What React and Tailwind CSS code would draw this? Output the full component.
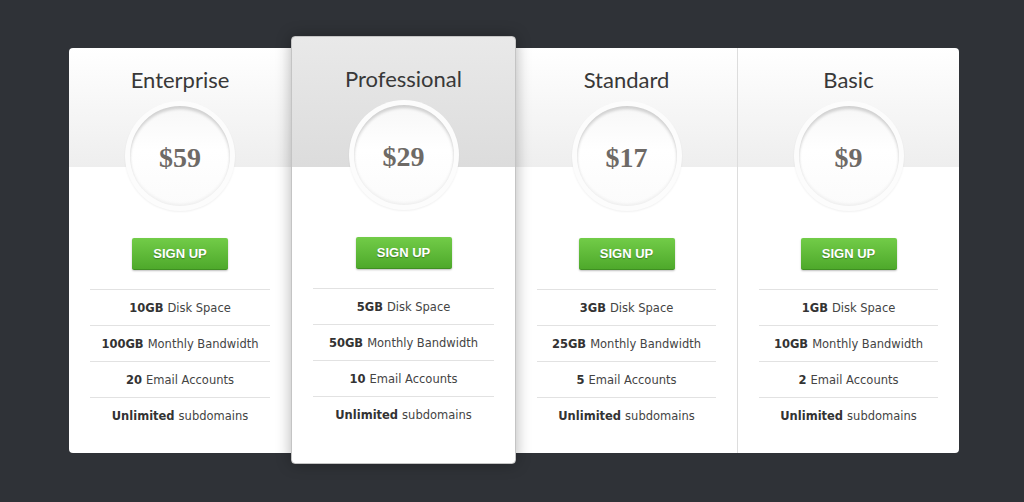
import React from 'react';

// Pricing plans shown in the table
const plans = [
  {
    name: 'Enterprise',
    price: '$59',
    features: [['10GB', 'Disk Space'], ['100GB', 'Monthly Bandwidth'], ['20', 'Email Accounts'], ['Unlimited', 'subdomains']],
  },
  {
    name: 'Professional',
    price: '$29',
    featured: true,
    features: [['5GB', 'Disk Space'], ['50GB', 'Monthly Bandwidth'], ['10', 'Email Accounts'], ['Unlimited', 'subdomains']],
  },
  {
    name: 'Standard',
    price: '$17',
    features: [['3GB', 'Disk Space'], ['25GB', 'Monthly Bandwidth'], ['5', 'Email Accounts'], ['Unlimited', 'subdomains']],
  },
  {
    name: 'Basic',
    price: '$9',
    features: [['1GB', 'Disk Space'], ['10GB', 'Monthly Bandwidth'], ['2', 'Email Accounts'], ['Unlimited', 'subdomains']],
  },
];

function PriceCircle({ price }) {
  return (
    <div className="mx-auto mt-[7px] flex h-[110px] w-[110px] items-center justify-center rounded-full bg-[#fcfcfc] shadow-[0_1px_2px_rgba(0,0,0,0.06)]">
      <div className="flex h-[100px] w-[100px] items-center justify-center rounded-full bg-[linear-gradient(to_bottom,#f7f7f7,#ffffff_45%,#fbfbfb)] shadow-[inset_0_3px_3px_rgba(0,0,0,0.16),inset_0_-2px_3px_rgba(0,0,0,0.05)]">
        <span className="pt-[4px] font-['Liberation_Serif',serif] text-[28px] font-bold text-[#6e6a66] [text-shadow:0_1px_0_#fff]">
          {price}
        </span>
      </div>
    </div>
  );
}

function PlanColumn({ plan, className }) {
  return (
    <div className={className}>
      <div className="pt-[18px] text-center font-['Lato',sans-serif] text-[22px] leading-[28px] text-[#383838]">
        {plan.name}
      </div>
      <PriceCircle price={plan.price} />
      <div className="mt-[27px] flex justify-center">
        <button className="h-[32px] w-[96px] rounded-[2px] border-b border-[#3f8f22] bg-[linear-gradient(to_bottom,#72cc48,#4ea92b)] font-['Liberation_Sans',sans-serif] text-[13px] font-bold text-white shadow-[0_1px_2px_rgba(0,0,0,0.25)] [text-shadow:0_1px_1px_rgba(0,0,0,0.3)]">
          SIGN UP
        </button>
      </div>
      <ul className="mt-[19px] px-[21px] font-['DejaVu_Sans',sans-serif] text-[11.5px] text-[#444]">
        {plan.features.map(([strong, rest]) => (
          <li key={rest} className="flex h-[36px] items-center justify-center border-t border-[#e2e2e2] pt-[2px]">
            <span className="font-bold text-[#333]">{strong}</span>
            <span className="ml-[4px]">{rest}</span>
          </li>
        ))}
      </ul>
    </div>
  );
}

export default function App() {
  return (
    <div className="h-[502px] w-full bg-[#2f3237] pl-[69px] pt-[48px]">
      <div className="grid h-[405px] w-[890px] grid-cols-[222px_225px_221px_222px]">
        <PlanColumn
          plan={plans[0]}
          className="rounded-l-[4px] bg-[linear-gradient(to_bottom,#ffffff_0,#eeeeee_119px,#ffffff_119px)]"
        />
        <PlanColumn
          plan={plans[1]}
          className="relative z-10 -mb-[11px] -mt-[12px] rounded-[4px] border border-[#c4c4c4] bg-[linear-gradient(to_bottom,#e9e9e9_0,#dcdcdc_130px,#ffffff_130px)] pt-[10px] shadow-[0_0_15px_rgba(0,0,0,0.3)]"
        />
        <PlanColumn
          plan={plans[2]}
          className="bg-[linear-gradient(to_bottom,#ffffff_0,#eeeeee_119px,#ffffff_119px)]"
        />
        <PlanColumn
          plan={plans[3]}
          className="rounded-r-[4px] border-l border-[#dddddd] bg-[linear-gradient(to_bottom,#ffffff_0,#eeeeee_119px,#ffffff_119px)]"
        />
      </div>
    </div>
  );
}
